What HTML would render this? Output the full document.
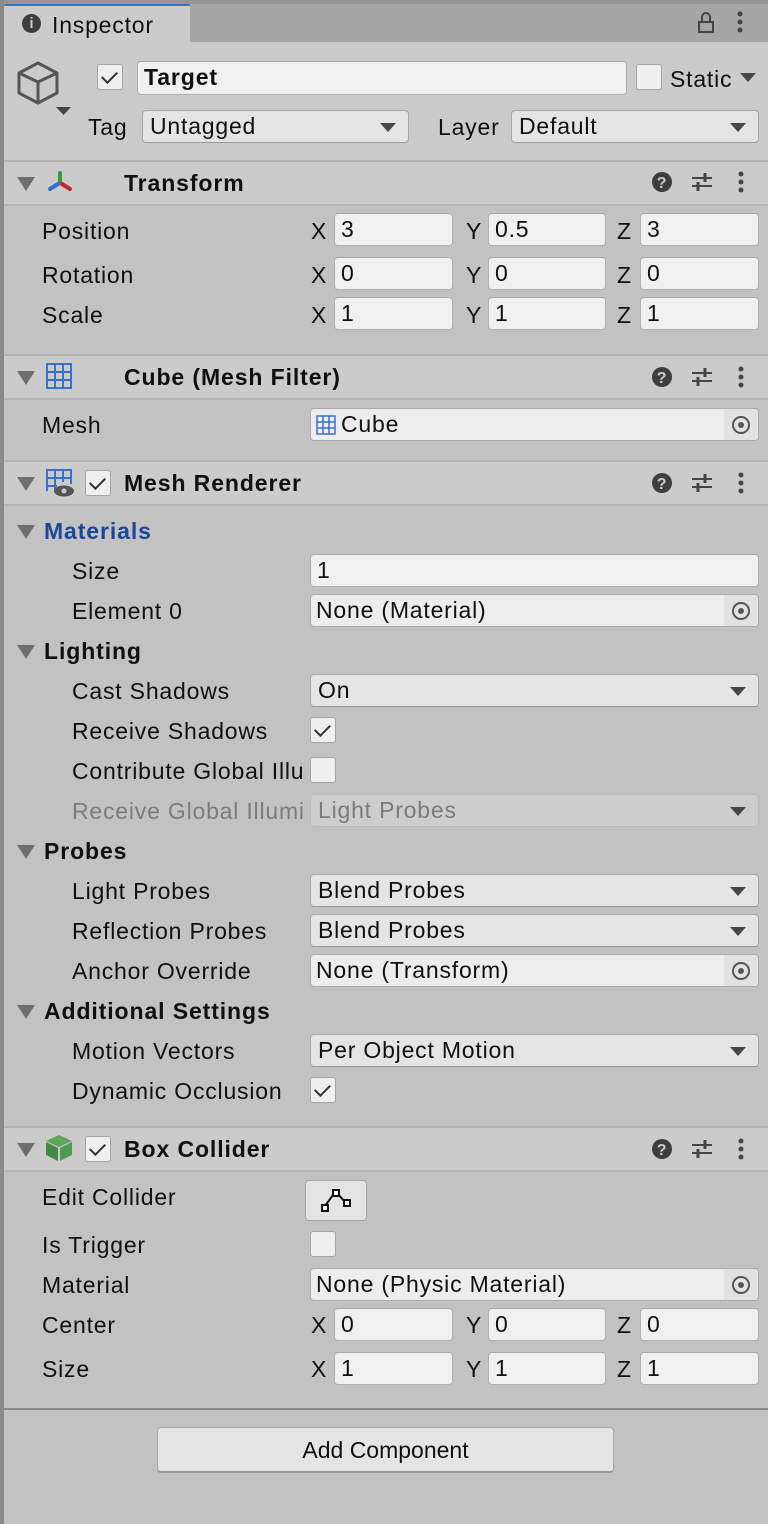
<!DOCTYPE html>
<html><head><meta charset="utf-8"><style>
*{margin:0;padding:0;box-sizing:border-box}
body{width:768px;height:1524px;background:#c2c2c2;font-family:"Liberation Sans",sans-serif;font-size:23px;letter-spacing:0.8px;color:#101010;position:relative;overflow:hidden}
div,span{position:absolute}
.l{line-height:26px;white-space:nowrap}
.b{font-weight:bold;letter-spacing:0.9px}
.f{background:#f0f0f0;border:1px solid #b0b0b0;border-top-color:#a8a8a8;border-radius:4px;height:33px;padding-left:6px;line-height:31px;white-space:nowrap}
.dd{background:#e4e4e4;border:1px solid #a9a9a9;border-bottom-color:#999;border-radius:4px;height:33px;padding-left:7px;line-height:31px;white-space:nowrap}
.dd:after{content:"";position:absolute;right:12px;top:12px;border-left:8px solid transparent;border-right:8px solid transparent;border-top:9px solid #474747}
.of{background:#ededed;border:1px solid #aaa;border-radius:4px;height:33px;padding-left:5px;line-height:31px;white-space:nowrap}
.of:after{content:"";position:absolute;right:0;top:0;width:34px;height:31px;background:#e2e2e2;border-radius:0 4px 4px 0}
.tgt{position:absolute;right:8px;top:7px;width:18px;height:18px;border:2px solid #555;border-radius:50%;z-index:2}
.tgt:after{content:"";position:absolute;left:4px;top:4px;width:6px;height:6px;background:#555;border-radius:50%}
.cb{width:26px;height:26px;background:#efefef;border:1px solid #a5a5a5;border-radius:3px}
.ck:after{content:"";position:absolute;left:7px;top:3px;width:7px;height:13px;border:solid #333;border-width:0 2px 2px 0;transform:rotate(45deg)}
.tri{width:0;height:0;border-left:9px solid transparent;border-right:9px solid transparent;border-top:14px solid #6f6f6f}
.hdr{left:4px;width:764px;height:44px;background:#cbcbcb;border-top:2px solid #b3b3b3}
.sep{left:4px;width:764px;height:2px;background:#b5b5b5}
.dis{color:#7c7c7c}
</style></head><body>
<div style="left:0;top:0;width:4px;height:1524px;background:#8a8a8a"></div>
<!-- tab bar -->
<div style="left:4px;top:0;width:764px;height:42px;background:#a5a5a5;border-top:4px solid #959595"></div>
<div style="left:4px;top:4px;width:186px;height:38px;background:#cbcbcb;border-top:2px solid #3a72c8;border-radius:2px 2px 0 0"></div>
<div style="left:22px;top:14px;width:19px;height:19px;background:#3e3e3e;border-radius:50%;color:#cbcbcb;font-size:15px;font-weight:bold;text-align:center;line-height:19px;letter-spacing:0">i</div>
<div class="l" style="left:52px;top:12px">Inspector</div>
<svg style="position:absolute;left:696px;top:10px" width="20" height="24"><path d="M3 12h14v10H3z M6 12V7a4 4 0 0 1 8 0V12" fill="none" stroke="#444" stroke-width="2"/></svg>
<svg style="position:absolute;left:734px;top:10px" width="12" height="24"><circle cx="6" cy="4" r="2.5" fill="#444"/><circle cx="6" cy="12" r="2.5" fill="#444"/><circle cx="6" cy="20" r="2.5" fill="#444"/></svg>
<!-- object header -->
<div style="left:4px;top:42px;width:764px;height:118px;background:#cbcbcb"></div>
<svg style="position:absolute;left:16px;top:60px" width="60" height="58"><path d="M22 3 L41 13 L41 33 L22 43 L3 33 L3 13 Z M3 13 L22 22 L41 13 M22 22 L22 43" fill="none" stroke="#555" stroke-width="3" stroke-linejoin="round"/><path d="M40 47h15l-7.5 8z" fill="#444"/></svg>
<div class="cb ck" style="left:97px;top:64px"></div>
<div class="f b" style="left:137px;top:61px;width:490px;height:34px;font-size:23px;padding-left:6px">Target</div>
<div class="cb" style="left:636px;top:64px"></div>
<div class="l" style="left:670px;top:66px">Static</div>
<div style="left:740px;top:73px;border-left:8px solid transparent;border-right:8px solid transparent;border-top:9px solid #474747"></div>
<div class="l" style="left:88px;top:114px">Tag</div>
<div class="dd" style="left:142px;top:110px;width:267px">Untagged</div>
<div class="l" style="left:438px;top:114px">Layer</div>
<div class="dd" style="left:511px;top:110px;width:248px">Default</div>
<!-- Transform -->
<div class="hdr" style="top:160px"></div>
<div class="tri" style="left:17px;top:177px"></div>
<svg style="position:absolute;left:46px;top:170px" width="28" height="24"><path d="M14 3v9" stroke="#3a9a3a" stroke-width="4" stroke-linecap="round"/><path d="M12 14l-8 5" stroke="#2f6fd0" stroke-width="4" stroke-linecap="round"/><path d="M16 14l8 5" stroke="#c02a2a" stroke-width="4" stroke-linecap="round"/></svg>
<div class="l b" style="left:124px;top:170px">Transform</div>
<!-- Mesh filter -->
<div class="hdr" style="top:354px"></div>
<svg style="position:absolute;left:46px;top:363px" width="26" height="26"><path d="M1 1h24v24H1z M9 1v24 M17 1v24 M1 9h24 M1 17h24" fill="none" stroke="#3a72c8" stroke-width="2"/></svg>
<div class="tri" style="left:17px;top:371px"></div>
<div class="l b" style="left:124px;top:364px">Cube (Mesh Filter)</div>
<!-- Mesh renderer -->
<div class="hdr" style="top:460px"></div>
<div class="tri" style="left:17px;top:477px"></div>
<svg style="position:absolute;left:46px;top:469px" width="30" height="30"><path d="M1 22V1h24v14 M9 1v20 M17 1v12 M1 9h24 M1 17h10" fill="none" stroke="#3a72c8" stroke-width="2"/><ellipse cx="18" cy="22" rx="10" ry="5.5" fill="#555"/><circle cx="18" cy="22" r="2.5" fill="#cbcbcb"/></svg>
<div class="cb ck" style="left:85px;top:470px"></div>
<div class="l b" style="left:124px;top:470px">Mesh Renderer</div>
<!-- box collider -->
<div class="hdr" style="top:1126px"></div>
<div class="tri" style="left:17px;top:1143px"></div>
<svg style="position:absolute;left:45px;top:1134px" width="28" height="28"><path d="M14 1L27 7L14 13L1 7Z" fill="#5fa55a"/><path d="M1 8L13 14V27L1 21Z" fill="#45894a"/><path d="M27 8L15 14V27L27 21Z" fill="#4e9a50"/></svg>
<div class="cb ck" style="left:85px;top:1136px"></div>
<div class="l b" style="left:124px;top:1136px">Box Collider</div>
<!-- header right icons -->
<svg style="position:absolute;left:650px;top:170px" width="106" height="24"><circle cx="12" cy="12" r="10" fill="#3e3e3e"/><text x="12" y="18" font-family="Liberation Sans" font-weight="bold" font-size="16" fill="#cbcbcb" text-anchor="middle">?</text><path d="M42 8h20 M42 16h20" stroke="#444" stroke-width="2"/><path d="M55 3v9 M48 12v9" stroke="#444" stroke-width="3"/><circle cx="91" cy="4" r="2.5" fill="#444"/><circle cx="91" cy="12" r="2.5" fill="#444"/><circle cx="91" cy="20" r="2.5" fill="#444"/></svg>
<svg style="position:absolute;left:650px;top:365px" width="106" height="24"><circle cx="12" cy="12" r="10" fill="#3e3e3e"/><text x="12" y="18" font-family="Liberation Sans" font-weight="bold" font-size="16" fill="#cbcbcb" text-anchor="middle">?</text><path d="M42 8h20 M42 16h20" stroke="#444" stroke-width="2"/><path d="M55 3v9 M48 12v9" stroke="#444" stroke-width="3"/><circle cx="91" cy="4" r="2.5" fill="#444"/><circle cx="91" cy="12" r="2.5" fill="#444"/><circle cx="91" cy="20" r="2.5" fill="#444"/></svg>
<svg style="position:absolute;left:650px;top:471px" width="106" height="24"><circle cx="12" cy="12" r="10" fill="#3e3e3e"/><text x="12" y="18" font-family="Liberation Sans" font-weight="bold" font-size="16" fill="#cbcbcb" text-anchor="middle">?</text><path d="M42 8h20 M42 16h20" stroke="#444" stroke-width="2"/><path d="M55 3v9 M48 12v9" stroke="#444" stroke-width="3"/><circle cx="91" cy="4" r="2.5" fill="#444"/><circle cx="91" cy="12" r="2.5" fill="#444"/><circle cx="91" cy="20" r="2.5" fill="#444"/></svg>
<svg style="position:absolute;left:650px;top:1137px" width="106" height="24"><circle cx="12" cy="12" r="10" fill="#3e3e3e"/><text x="12" y="18" font-family="Liberation Sans" font-weight="bold" font-size="16" fill="#cbcbcb" text-anchor="middle">?</text><path d="M42 8h20 M42 16h20" stroke="#444" stroke-width="2"/><path d="M55 3v9 M48 12v9" stroke="#444" stroke-width="3"/><circle cx="91" cy="4" r="2.5" fill="#444"/><circle cx="91" cy="12" r="2.5" fill="#444"/><circle cx="91" cy="20" r="2.5" fill="#444"/></svg>
<div class="sep" style="top:204px"></div>
<div class="sep" style="top:398px"></div>
<div class="sep" style="top:504px"></div>
<div class="sep" style="top:1170px"></div>
<!-- Transform rows -->
<div class="l" style="left:42px;top:218px">Position</div>
<div class="l" style="left:42px;top:262px">Rotation</div>
<div class="l" style="left:42px;top:302px">Scale</div>
<div class="l" style="left:311px;top:218px">X</div><div class="f" style="left:334px;top:213px;width:119px">3</div>
<div class="l" style="left:466px;top:218px">Y</div><div class="f" style="left:488px;top:213px;width:118px">0.5</div>
<div class="l" style="left:617px;top:218px">Z</div><div class="f" style="left:640px;top:213px;width:119px">3</div>
<div class="l" style="left:311px;top:262px">X</div><div class="f" style="left:334px;top:257px;width:119px">0</div>
<div class="l" style="left:466px;top:262px">Y</div><div class="f" style="left:488px;top:257px;width:118px">0</div>
<div class="l" style="left:617px;top:262px">Z</div><div class="f" style="left:640px;top:257px;width:119px">0</div>
<div class="l" style="left:311px;top:302px">X</div><div class="f" style="left:334px;top:297px;width:119px">1</div>
<div class="l" style="left:466px;top:302px">Y</div><div class="f" style="left:488px;top:297px;width:118px">1</div>
<div class="l" style="left:617px;top:302px">Z</div><div class="f" style="left:640px;top:297px;width:119px">1</div>
<!-- Mesh -->
<div class="l" style="left:42px;top:412px">Mesh</div>
<div class="of" style="left:310px;top:408px;width:449px;padding-left:30px">Cube<span class="tgt"></span></div>
<svg style="position:absolute;left:316px;top:415px" width="20" height="20"><path d="M1 1h18v18H1z M7 1v18 M13 1v18 M1 7h18 M1 13h18" fill="none" stroke="#3a72c8" stroke-width="1.5"/></svg>
<!-- Mesh renderer rows -->
<div class="tri" style="left:17px;top:525px"></div>
<div class="l b" style="left:44px;top:518px;color:#1c4796">Materials</div>
<div class="l" style="left:72px;top:558px">Size</div>
<div class="f" style="left:310px;top:554px;width:449px">1</div>
<div class="l" style="left:72px;top:598px">Element 0</div>
<div class="of" style="left:310px;top:594px;width:449px">None (Material)<span class="tgt"></span></div>
<div class="tri" style="left:17px;top:645px"></div>
<div class="l b" style="left:44px;top:638px">Lighting</div>
<div class="l" style="left:72px;top:678px">Cast Shadows</div>
<div class="dd" style="left:310px;top:674px;width:449px">On</div>
<div class="l" style="left:72px;top:718px">Receive Shadows</div>
<div class="cb ck" style="left:310px;top:717px"></div>
<div class="l" style="left:72px;top:758px;width:234px;overflow:hidden">Contribute Global Illumination</div>
<div class="cb" style="left:310px;top:757px"></div>
<div class="l dis" style="left:72px;top:798px;width:234px;overflow:hidden">Receive Global Illumination</div>
<div class="dd dis" style="left:310px;top:794px;width:449px;background:#cdcdcd;border-color:#bbb">Light Probes</div>
<div class="tri" style="left:17px;top:845px"></div>
<div class="l b" style="left:44px;top:838px">Probes</div>
<div class="l" style="left:72px;top:878px">Light Probes</div>
<div class="dd" style="left:310px;top:874px;width:449px">Blend Probes</div>
<div class="l" style="left:72px;top:918px">Reflection Probes</div>
<div class="dd" style="left:310px;top:914px;width:449px">Blend Probes</div>
<div class="l" style="left:72px;top:958px">Anchor Override</div>
<div class="of" style="left:310px;top:954px;width:449px">None (Transform)<span class="tgt"></span></div>
<div class="tri" style="left:17px;top:1005px"></div>
<div class="l b" style="left:44px;top:998px">Additional Settings</div>
<div class="l" style="left:72px;top:1038px">Motion Vectors</div>
<div class="dd" style="left:310px;top:1034px;width:449px">Per Object Motion</div>
<div class="l" style="left:72px;top:1078px">Dynamic Occlusion</div>
<div class="cb ck" style="left:310px;top:1077px"></div>
<!-- Box collider rows -->
<div class="l" style="left:42px;top:1184px">Edit Collider</div>
<div style="left:305px;top:1180px;width:62px;height:41px;background:#e4e4e4;border:1px solid #a9a9a9;border-radius:4px"></div>
<svg style="position:absolute;left:318px;top:1186px" width="36" height="28"><path d="M7 20L15 9 M20 8l7 8" stroke="#111" stroke-width="2"/><rect x="4" y="19" width="6" height="6" fill="#fff" stroke="#111" stroke-width="2"/><rect x="15" y="4" width="6" height="6" fill="#fff" stroke="#111" stroke-width="2"/><rect x="26" y="14" width="6" height="6" fill="#fff" stroke="#111" stroke-width="2"/></svg>
<div class="l" style="left:42px;top:1232px">Is Trigger</div>
<div class="cb" style="left:310px;top:1231px"></div>
<div class="l" style="left:42px;top:1272px">Material</div>
<div class="of" style="left:310px;top:1268px;width:449px">None (Physic Material)<span class="tgt"></span></div>
<div class="l" style="left:42px;top:1312px">Center</div>
<div class="l" style="left:42px;top:1356px">Size</div>
<div class="l" style="left:311px;top:1312px">X</div><div class="f" style="left:334px;top:1308px;width:119px">0</div>
<div class="l" style="left:466px;top:1312px">Y</div><div class="f" style="left:488px;top:1308px;width:118px">0</div>
<div class="l" style="left:617px;top:1312px">Z</div><div class="f" style="left:640px;top:1308px;width:119px">0</div>
<div class="l" style="left:311px;top:1356px">X</div><div class="f" style="left:334px;top:1352px;width:119px">1</div>
<div class="l" style="left:466px;top:1356px">Y</div><div class="f" style="left:488px;top:1352px;width:118px">1</div>
<div class="l" style="left:617px;top:1356px">Z</div><div class="f" style="left:640px;top:1352px;width:119px">1</div>
<div style="left:4px;top:1408px;width:764px;height:2px;background:#8a8a8a"></div>
<div style="left:157px;top:1427px;width:457px;height:46px;background:#e4e4e4;border:1px solid #a9a9a9;border-bottom:2px solid #999;border-radius:4px;text-align:center;line-height:44px;letter-spacing:0;font-size:23px">Add Component</div>
</body></html>
